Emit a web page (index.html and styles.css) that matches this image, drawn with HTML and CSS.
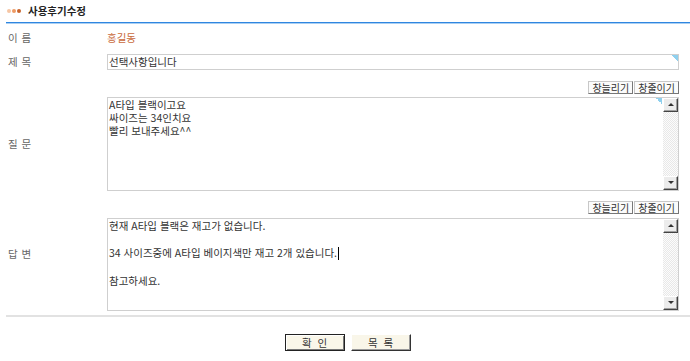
FILE: index.html
```html
<!DOCTYPE html>
<html lang="ko">
<head>
<meta charset="utf-8">
<title>사용후기수정</title>
<link rel="stylesheet" href="styles.css">
</head>
<body>
<div class="page">
  <div class="title">
    <span class="dots"><i class="d1"></i><i class="d2"></i><i class="d3"></i></span>
    <h1>사용후기수정</h1>
  </div>
  <div class="form">
    <div class="label l-name">이 름</div>
    <div class="val v-name">홍길동</div>

    <div class="label l-subj">제 목</div>
    <div class="val v-subj"><div class="inp">선택사항입니다<i class="corner"></i></div></div>

    <div class="tools t-q"><span class="sbtn">창늘리기</span><span class="sbtn">창줄이기</span></div>
    <div class="label l-q">질 문</div>
    <div class="val v-q">
      <div class="ta h94">
        <div class="ta-text lh13">A타입 블랙이고요
싸이즈는 34인치요
빨리 보내주세요^^</div>
        <i class="corner c-ta"></i>
        <div class="sb"><span class="sb-btn up"></span><span class="sb-track"></span><span class="sb-btn down"></span></div>
      </div>
    </div>

    <div class="label l-a">답 변</div>
    <div class="tools t-a"><span class="sbtn">창늘리기</span><span class="sbtn">창줄이기</span></div>
    <div class="val v-a">
      <div class="ta h93">
        <div class="ta-text lh135">현재 A타입 블랙은 재고가 없습니다.

34 사이즈중에 A타입 베이지색만 재고 2개 있습니다.<span class="caret"></span>

참고하세요.</div>
        <div class="sb"><span class="sb-btn up"></span><span class="sb-track"></span><span class="sb-btn down"></span></div>
      </div>
    </div>
  </div>
  <div class="sep"></div>
  <div class="actions">
    <span class="btn btn-ok">확&nbsp;&nbsp;인</span>
    <span class="btn">목&nbsp;&nbsp;록</span>
  </div>
</div>
</body>
</html>
```

FILE: styles.css
```css
html, body {
  margin: 0;
  padding: 0;
  background: #fff;
}
body {
  font-family: "Noto Sans CJK KR", "Noto Sans", sans-serif;
  font-size: 10.5px;
  color: #555;
}
.page {
  padding-left: 6px;
}
.title {
  height: 22px;
  display: flex;
  align-items: center;
  border-bottom: 1px solid #2f86e0;
  box-shadow: 0 1px 0 #a9cff3;
}
.dots {
  display: flex;
  gap: 1px;
  margin-left: 1px;
  margin-right: 7px;
}
.dots i {
  display: block;
  width: 4px;
  height: 4px;
  border-radius: 50%;
}
.d1 { background: #f6c6a4; }
.d2 { background: #ee9a64; }
.d3 { background: #c8642c; }
h1 {
  margin: 0;
  font-size: 10.5px;
  font-weight: bold;
  color: #222;
  line-height: 12px;
}
.form {
  margin-top: 1px;
  display: grid;
  grid-template-columns: 101px 572px;
  grid-template-rows: 28px 20px 25px 94px 27px 93px;
}
.label {
  padding-left: 2px;
  color: #666;
  line-height: 12px;
  align-self: center;
  grid-column: 1;
  word-spacing: 1px;
}
.val {
  grid-column: 2;
  line-height: 12px;
}
.l-name { grid-row: 1; }
.v-name { grid-row: 1; align-self: center; color: #c96a3c; }
.l-subj { grid-row: 2; }
.v-subj { grid-row: 2; align-self: center; }
.t-q { grid-row: 3; grid-column: 2; padding-top: 9px; }
.l-q { grid-row: 4; }
.v-q { grid-row: 4; }
.l-a { grid-row: 5 / 7; padding-top: 6px; }
.t-a { grid-row: 5; grid-column: 2; padding-top: 10px; }
.v-a { grid-row: 6; }

.inp {
  position: relative;
  height: 14px;
  border: 1px solid #cfcfcf;
  line-height: 14px;
  padding-left: 1px;
  color: #333;
}
.corner {
  position: absolute;
  top: 0;
  right: 0;
  width: 6px;
  height: 6px;
  background: linear-gradient(to bottom left, #8fd0ee 50%, transparent 50%);
}
.tools {
  display: flex;
  justify-content: flex-end;
  gap: 1px;
  align-items: flex-start;
}
.sbtn {
  display: block;
  height: 11px;
  line-height: 11px;
  font-size: 10px;
  padding: 0 3px;
  color: #333;
  background: #fbfbfb;
  border: 1px solid #c8c8c8;
  border-right-color: #777;
  border-bottom-color: #777;
}
.ta {
  position: relative;
  display: flex;
  border: 1px solid #cfcfcf;
  box-sizing: border-box;
  background: #fff;
}
.h94 { height: 94px; }
.h93 { height: 93px; }
.ta-text {
  flex: 1;
  white-space: pre-line;
  color: #333;
  padding-left: 1px;
}
.lh13 { line-height: 13px; }
.lh135 { line-height: 13.5px; }
.caret {
  display: inline-block;
  width: 1px;
  height: 13px;
  background: #000;
  vertical-align: -3px;
  margin-left: 1px;
}
.c-ta {
  right: 16px;
}
.sb {
  width: 15px;
  display: flex;
  flex-direction: column;
  background-color: #f4f4f4;
  background-image: repeating-conic-gradient(#e8e8e8 0 25%, #fcfcfc 0 50%);
  background-size: 2px 2px;
}
.sb-track { flex: 1; }
.sb-btn {
  position: relative;
  display: block;
  height: 12px;
  width: 13px;
  background: #ececec;
  border: 1px solid #fff;
  border-right-color: #444;
  border-bottom-color: #444;
  box-shadow: inset -1px -1px 0 #a0a0a0;
}
.sb-btn::after {
  content: "";
  position: absolute;
  left: 4px;
  width: 0;
  height: 0;
  border-left: 3px solid transparent;
  border-right: 3px solid transparent;
}
.up::after {
  top: 4px;
  border-bottom: 3px solid #333;
}
.down::after {
  top: 4px;
  border-top: 3px solid #333;
}
.sep {
  margin-top: 4px;
  height: 2px;
  background: #e2e2e2;
}
.actions {
  margin-top: 17px;
  display: flex;
  justify-content: center;
  gap: 6px;
  padding-right: 1px;
}
.btn {
  display: block;
  width: 58px;
  height: 15px;
  line-height: 15px;
  text-align: center;
  color: #333;
  background: #f9f6e9;
  border: 1px solid #fff;
  border-right-color: #333;
  border-bottom-color: #333;
  box-shadow: inset -1px -1px 0 #9a9a9a;
}
.btn-ok {
  border-color: #222;
  box-shadow: inset 1px 1px 0 #fff, inset -1px -1px 0 #777;
}
```
